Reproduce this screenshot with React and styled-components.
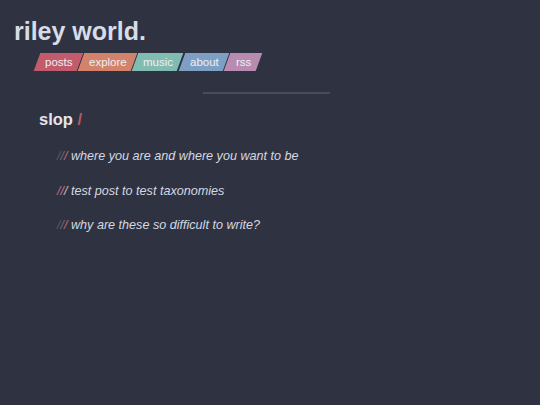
import React from "react";
import styled, { createGlobalStyle } from "styled-components";

const Global = createGlobalStyle`
  html, body { margin: 0; padding: 0; background: #2f3341; }
  body { font-family: "Liberation Sans", Arial, sans-serif; color: #d6dae4; }
  #root { min-height: 405px; }
`;

const Page = styled.div`
  width: 540px;
  min-height: 405px;
  background: #2f3341;
  padding: 16px 0 0 0;
  box-sizing: border-box;
`;

const Header = styled.header`
  display: flex;
  flex-direction: column;
  padding-left: 14px;
`;

const Title = styled.h1`
  margin: 0;
  font-size: 25px;
  line-height: 30px;
  font-weight: 700;
  color: #d8dce6;
`;

const Nav = styled.nav`
  display: flex;
  gap: 1.5px;
  margin: 7px 0 0 23px;
`;

const Tab = styled.a`
  display: flex;
  align-items: center;
  justify-content: center;
  height: 18px;
  padding: 0 ${(p) => p.$pad}px;
  background: ${(p) => p.$bg};
  transform: skewX(-20deg);
  color: #eef0f4;
  font-size: 11.5px;
  text-decoration: none;
  span { display: block; transform: skewX(20deg); }
`;

const Divider = styled.div`
  width: 127px;
  height: 2px;
  background: #474d5c;
  margin: 21px 0 0 203px;
`;

const Section = styled.section`
  padding-left: 39px;
  margin-top: 15px;
`;

const Heading = styled.h2`
  margin: 0;
  font-size: 16.5px;
  line-height: 20px;
  font-weight: 700;
  color: #e2e5ec;
  span { color: #b45a64; }
`;

const List = styled.ul`
  list-style: none;
  margin: 20px 0 0 0;
  padding: 0 0 0 18px;
  display: flex;
  flex-direction: column;
  gap: 19.5px;
`;

const Item = styled.li`
  font-size: 12.6px;
  line-height: 15px;
  font-style: italic;
  color: #d4d8e2;
`;

const Slash = styled.span`
  color: ${(p) => p.$c};
`;

const tabs = [
  { label: "posts", bg: "#c25b6b", pad: 7.5 },
  { label: "explore", bg: "#d3826b", pad: 7.5 },
  { label: "music", bg: "#80bcb1", pad: 7.5 },
  { label: "about", bg: "#7d9fc4", pad: 7.5 },
  { label: "rss", bg: "#b98bb0", pad: 8.5 },
];

const items = [
  { text: "where you are and where you want to be", s: ["#565c6c", "#6a6f80", "#c7687a"] },
  { text: "test post to test taxonomies", s: ["#c7687a", "#c07e8e", "#c9c0c8"] },
  { text: "why are these so difficult to write?", s: ["#565c6c", "#6a6f80", "#c7687a"] },
];

export default function App() {
  return (
    <Page>
      <Global />
      <Header>
        <Title>riley world.</Title>
        <Nav>
          {tabs.map((t) => (
            <Tab key={t.label} $bg={t.bg} $pad={t.pad} href="#">
              <span>{t.label}</span>
            </Tab>
          ))}
        </Nav>
      </Header>
      <Divider />
      <Section>
        <Heading>
          slop <span>/</span>
        </Heading>
        <List>
          {items.map((it) => (
            <Item key={it.text}>
              <Slash $c={it.s[0]}>/</Slash>
              <Slash $c={it.s[1]}>/</Slash>
              <Slash $c={it.s[2]}>/</Slash> {it.text}
            </Item>
          ))}
        </List>
      </Section>
    </Page>
  );
}
